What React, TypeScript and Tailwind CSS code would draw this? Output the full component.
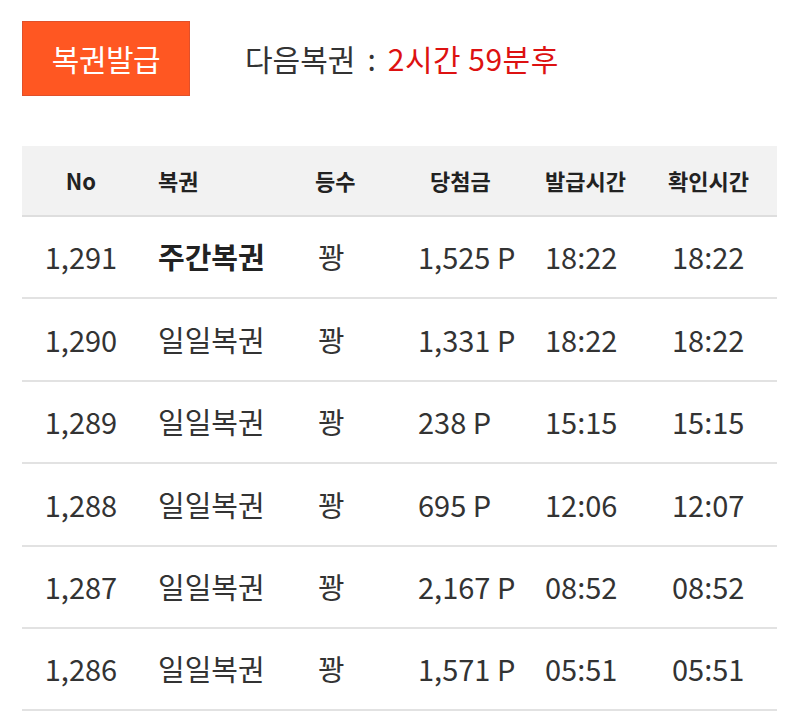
const rows = [
  { no: "1,291", name: "주간복권", rank: "꽝", prize: "1,525 P", issued: "18:22", checked: "18:22", bold: true },
  { no: "1,290", name: "일일복권", rank: "꽝", prize: "1,331 P", issued: "18:22", checked: "18:22" },
  { no: "1,289", name: "일일복권", rank: "꽝", prize: "238 P", issued: "15:15", checked: "15:15" },
  { no: "1,288", name: "일일복권", rank: "꽝", prize: "695 P", issued: "12:06", checked: "12:07" },
  { no: "1,287", name: "일일복권", rank: "꽝", prize: "2,167 P", issued: "08:52", checked: "08:52" },
  { no: "1,286", name: "일일복권", rank: "꽝", prize: "1,571 P", issued: "05:51", checked: "05:51" },
];

const cols = "grid grid-cols-[118px_160px_100px_127px_123px_127px]";

export default function App() {
  return (
    <div className="min-h-[727px] bg-white pt-[21px] font-['Noto_Sans_CJK_KR',sans-serif]">
      <div className="flex items-center pl-[22px]">
        <button className="flex h-[75px] w-[168px] items-center justify-center border border-[#e0502a] bg-[#ff5722] text-[30px] tracking-[-0.5px] text-white">
          복권발급
        </button>
        <div className="ml-[55px] flex items-center text-[30px] text-[#333]">
          <span>다음복권</span>
          <span className="ml-[12px] mr-[12px]">:</span>
          <span className="tracking-[0.5px] text-[#dd1111]">2시간 59분후</span>
        </div>
      </div>

      <div className="mx-[22px] mt-[50px] w-[755px]">
        <div className={`${cols} h-[71px] items-center border-b-2 border-[#dedede] bg-[#f2f2f2] text-[22px] font-bold text-[#222]`}>
          <div className="text-center">No</div>
          <div className="pl-[18px]">복권</div>
          <div className="pl-[15px]">등수</div>
          <div className="pl-[30px]">당첨금</div>
          <div className="pl-[18px]">발급시간</div>
          <div className="pl-[18px]">확인시간</div>
        </div>
        {rows.map((r) => (
          <div
            key={r.no}
            className={`${cols} h-[82.4px] items-center border-b-2 border-[#e2e2e2] text-[29px] text-[#333]`}
          >
            <div className="text-center">{r.no}</div>
            <div className={r.bold ? "pl-[18px] font-bold text-[#222]" : "pl-[18px]"}>{r.name}</div>
            <div className="pl-[18px]">{r.rank}</div>
            <div className="pl-[18px]">{r.prize}</div>
            <div className="pl-[18px]">{r.issued}</div>
            <div className="pl-[22px]">{r.checked}</div>
          </div>
        ))}
      </div>
    </div>
  );
}
